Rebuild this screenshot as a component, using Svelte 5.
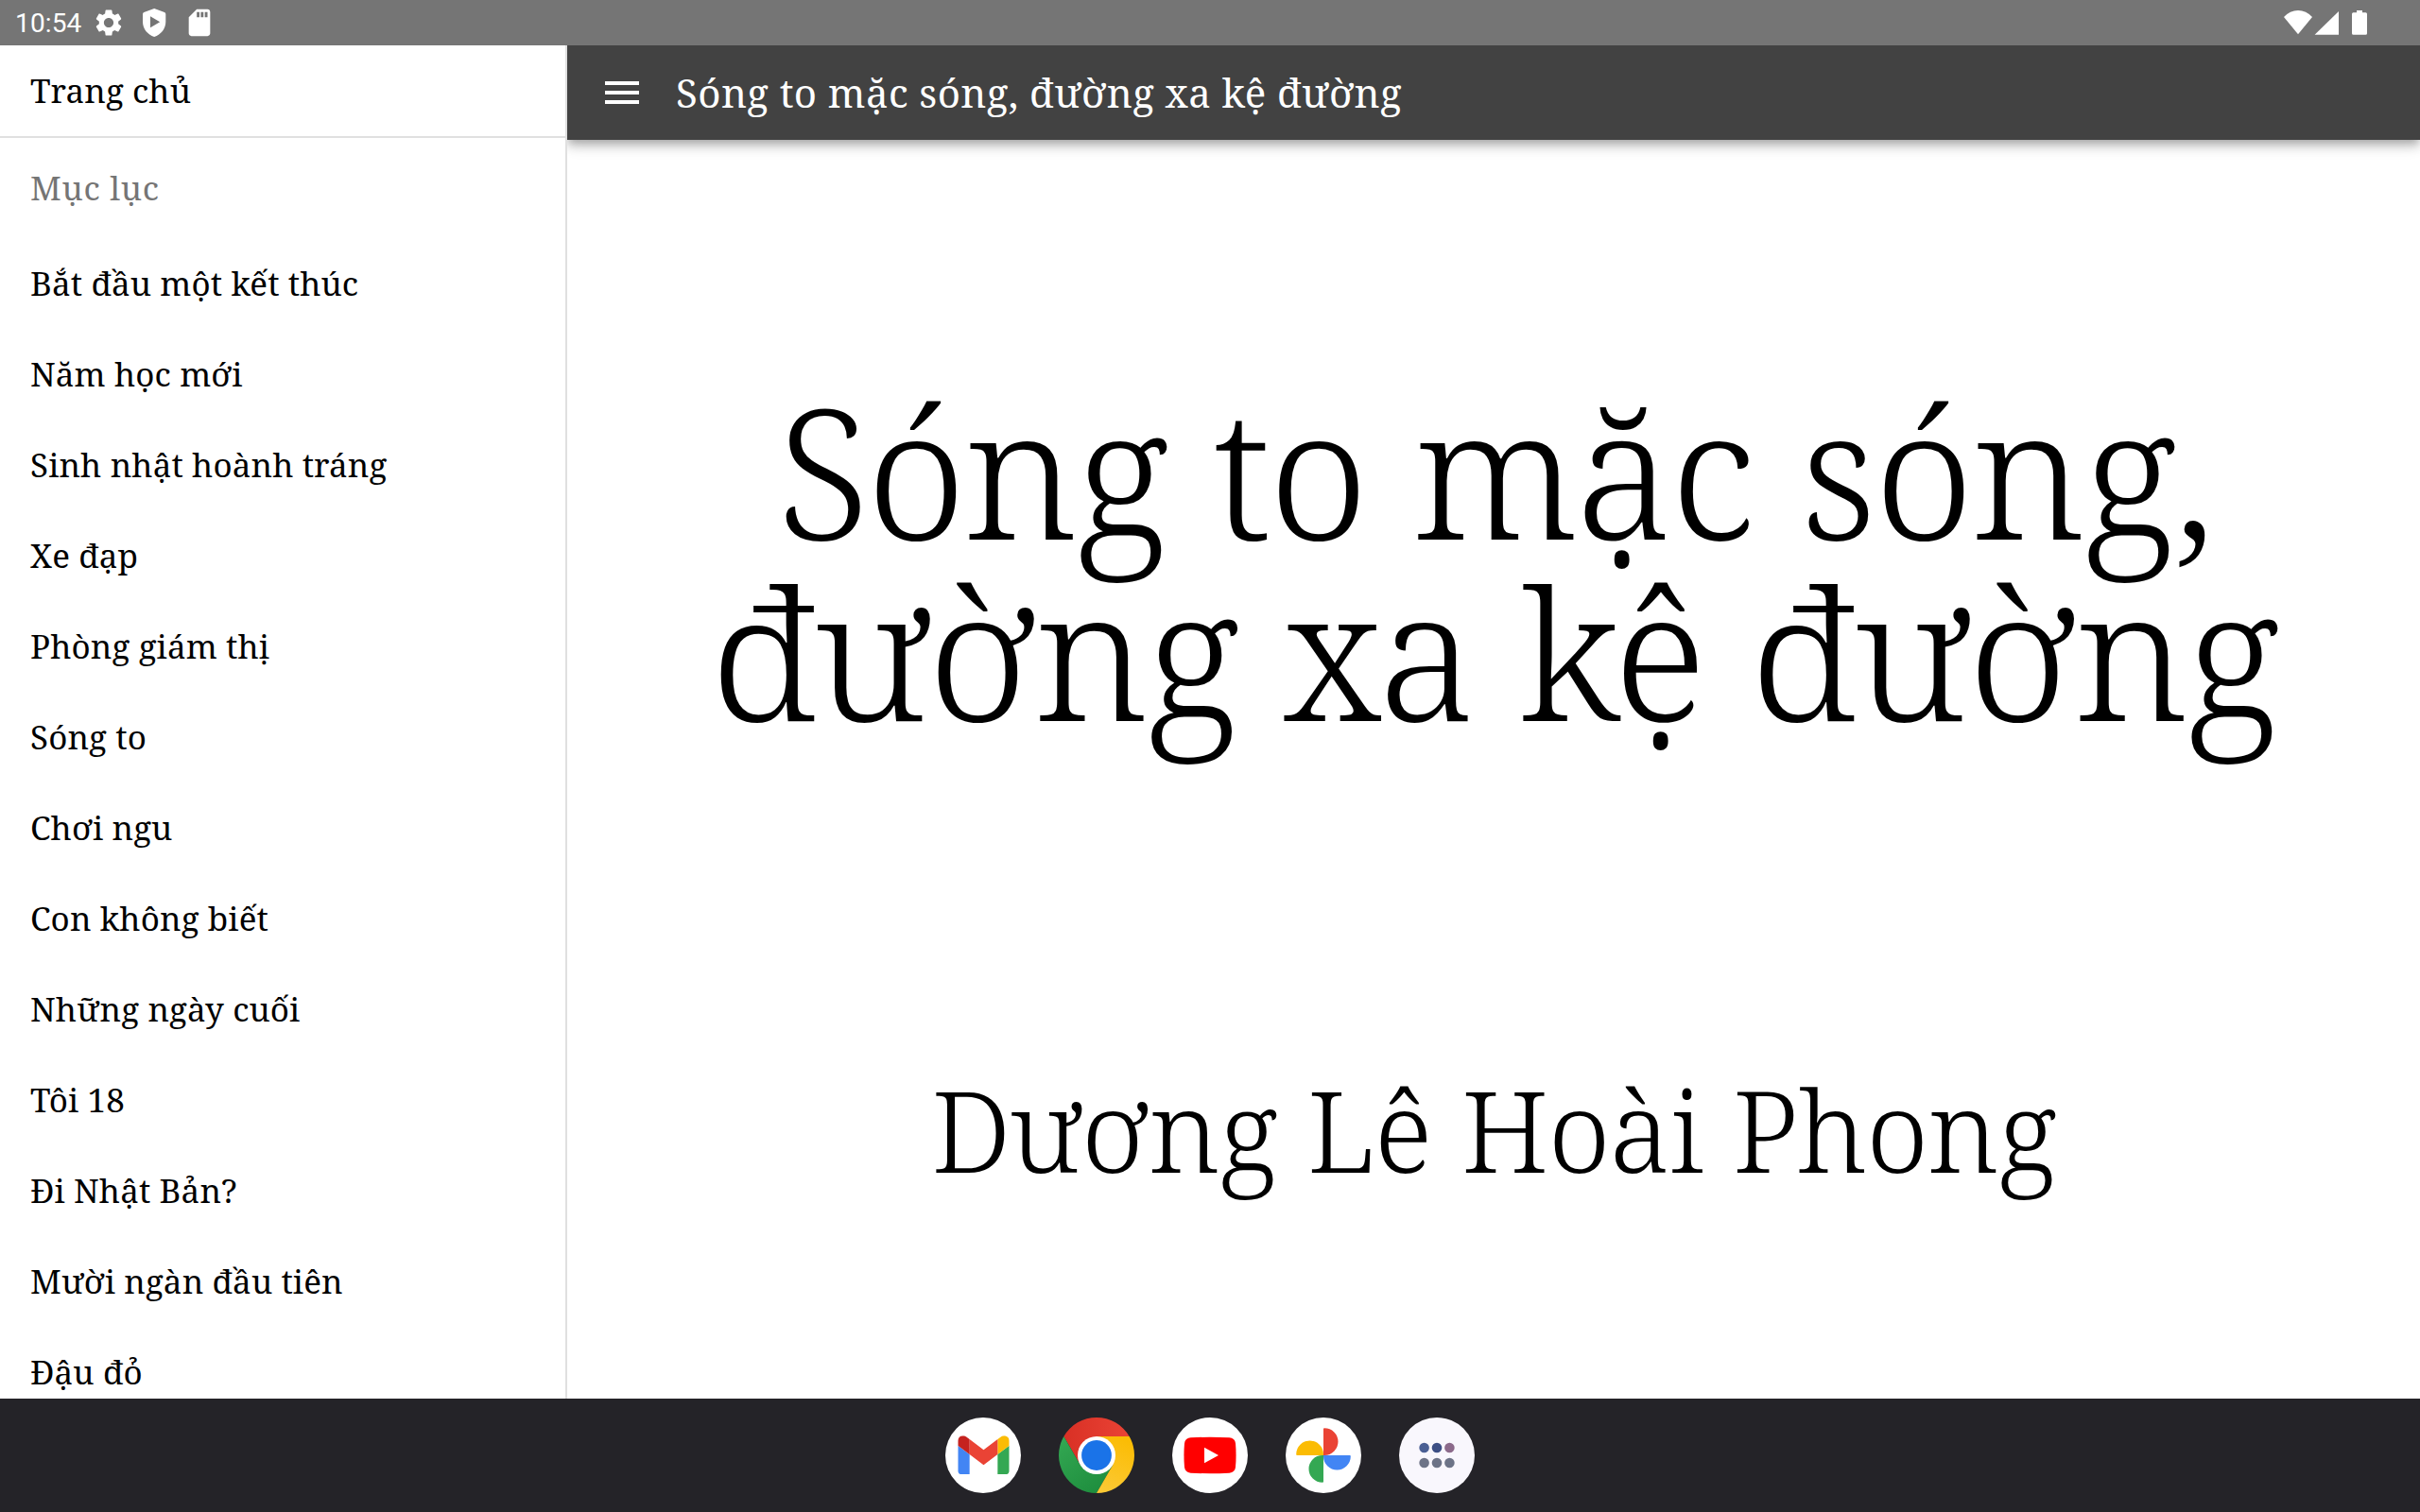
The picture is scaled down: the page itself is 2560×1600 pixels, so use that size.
<script>
  const title = 'Sóng to mặc sóng, đường xa kệ đường';
  const titleLines = ['Sóng to mặc sóng,', 'đường xa kệ đường'];
  const chapters = [
    'Bắt đầu một kết thúc',
    'Năm học mới',
    'Sinh nhật hoành tráng',
    'Xe đạp',
    'Phòng giám thị',
    'Sóng to',
    'Chơi ngu',
    'Con không biết',
    'Những ngày cuối',
    'Tôi 18',
    'Đi Nhật Bản?',
    'Mười ngàn đầu tiên',
    'Đậu đỏ'
  ];
</script>

<div class="screen">
  <div class="status">
    <span class="clock">10:54</span>
    <svg class="notices" width="132" height="48" viewBox="0 0 132 48" fill="#fff">
      <!-- settings -->
      <path transform="translate(8 7) scale(1.4167)" d="M19.14 12.94c.04-.3.06-.61.06-.94 0-.32-.02-.64-.07-.94l2.03-1.58c.18-.14.23-.41.12-.61l-1.92-3.32c-.12-.22-.37-.29-.59-.22l-2.39.96c-.5-.38-1.03-.7-1.62-.94l-.36-2.54c-.04-.24-.24-.41-.48-.41h-3.84c-.24 0-.43.17-.47.41l-.36 2.54c-.59.24-1.13.57-1.62.94l-2.39-.96c-.22-.08-.47 0-.59.22L2.74 8.87c-.12.21-.08.47.12.61l2.03 1.58c-.05.3-.09.63-.09.94s.02.64.07.94l-2.03 1.58c-.18.14-.23.41-.12.61l1.92 3.32c.12.22.37.29.59.22l2.39-.96c.5.38 1.03.7 1.62.94l.36 2.54c.05.24.24.41.48.41h3.84c.24 0 .44-.17.47-.41l.36-2.54c.59-.24 1.13-.56 1.62-.94l2.39.96c.22.08.47 0 .59-.22l1.92-3.32c.12-.22.07-.47-.12-.61l-2.01-1.58zM12 15.6c-1.98 0-3.6-1.62-3.6-3.6s1.62-3.6 3.6-3.6 3.6 1.62 3.6 3.6-1.62 3.6-3.6 3.6z" />
      <!-- play protect shield -->
      <path fill-rule="evenodd" d="M73.2 9 84 13q1.300.5 1.300 2V23c0 7.500-5 13.500-12.100 16C66 36.500 61 30.500 61 23V15q0-1.500 1.300-2zM69 17.200V29.200L79.200 23.200z" />
      <!-- sd card -->
      <path transform="translate(104 7) scale(1.4167)" d="M18 2h-8L4.020 8 4 20c0 1.100.9 2 2 2h12c1.100 0 2-.9 2-2V4c0-1.100-.9-2-2-2zm-6 6h-2V4h2v4zm3 0h-2V4h2v4zm3 0h-2V4h2v4z" />
    </svg>
    <svg class="signals" width="90" height="48" viewBox="0 0 90 48" fill="#fff">
      <path d="M15 36.300 0 18Q6.500 11 15 11T30 18z" />
      <path d="M58 12V36.700H32.600z" />
      <path d="M77 11h6v2.300h3.500a1.500 1.500 0 0 1 1.500 1.500V35.300a1.500 1.500 0 0 1-1.500 1.500h-13a1.500 1.500 0 0 1-1.500-1.500V14.800a1.500 1.500 0 0 1 1.500-1.500H77z" />
    </svg>
  </div>

  <div class="body">
    <nav class="drawer">
      <div class="item home">Trang chủ</div>
      <div class="heading">Mục lục</div>
      {#each chapters as chapter}
        <div class="item">{chapter}</div>
      {/each}
    </nav>

    <div class="page">
      <header class="appbar">
        <svg width="36" height="24" viewBox="0 0 36 24" fill="#fff">
          <path d="M0 0h36v4H0zM0 10h36v4H0zM0 20h36v4H0z" />
        </svg>
        <span>{title}</span>
      </header>
      <main class="cover">
        <h1>
          {#each titleLines as line}<div>{line}</div>{/each}
        </h1>
        <p>Dương Lê Hoài Phong</p>
      </main>
    </div>
  </div>

  <div class="dock">
    <!-- Gmail -->
    <svg viewBox="0 0 80 80">
      <circle cx="40" cy="40" r="40" fill="#fff" />
      <svg x="13.300" y="19.300" width="54.400" height="40.800" viewBox="52 42 88 66">
        <path fill="#4285f4" d="M58 108h14V74L52 59v43c0 3.320 2.690 6 6 6" />
        <path fill="#34a853" d="M120 108h14c3.320 0 6-2.690 6-6V59l-20 15" />
        <path fill="#fbbc04" d="M120 48v26l20-15v-8c0-7.420-8.470-11.650-14.400-7.200" />
        <path fill="#ea4335" d="M72 74V48l24 18 24-18v26L96 92" />
        <path fill="#c5221f" d="M52 51v8l20 15V48l-5.600-4.200c-5.940-4.450-14.400-.22-14.400 7.200" />
      </svg>
    </svg>
    <!-- Chrome -->
    <svg viewBox="0 0 80 80">
      <defs>
        <linearGradient id="cr" x1="0" y1="0" x2="1" y2="0"><stop offset="0" stop-color="#d93025" /><stop offset="1" stop-color="#ea4335" /></linearGradient>
        <linearGradient id="cg" x1="0" y1="0" x2=".7" y2="1"><stop offset="0" stop-color="#34a853" /><stop offset="1" stop-color="#1e8e3e" /></linearGradient>
        <linearGradient id="cy" x1=".3" y1="1" x2=".6" y2="0"><stop offset="0" stop-color="#fcc934" /><stop offset="1" stop-color="#fbbc04" /></linearGradient>
      </defs>
      <path fill="url(#cr)" d="M5.360 20A40 40 0 0 1 74.640 20H40L40 40 22.680 50z" />
      <path fill="url(#cg)" d="M5.360 20 22.680 50 40 40 57.320 50 40 80A40 40 0 0 1 5.360 20z" />
      <path fill="url(#cy)" d="M74.640 20A40 40 0 0 1 40 80L57.320 50 40 40V20z" />
      <circle cx="40" cy="40" r="20" fill="#fff" />
      <circle cx="40" cy="40" r="15.900" fill="#1a73e8" />
    </svg>
    <!-- YouTube -->
    <svg viewBox="0 0 80 80">
      <circle cx="40" cy="40" r="40" fill="#fff" />
      <path fill="#f00" d="M19.500 21.300Q40 20.200 60.500 21.300 66.400 21.900 67 27.500 68.100 40 67 52.500 66.400 58.100 60.500 58.700 40 59.800 19.500 58.700 13.600 58.100 13 52.500 11.900 40 13 27.500 13.600 21.900 19.500 21.300z" />
      <path fill="#fff" d="M34 31.700V48.300L49 40z" />
    </svg>
    <!-- Photos -->
    <svg viewBox="0 0 80 80">
      <circle cx="40" cy="40" r="40" fill="#fff" />
      <path fill="#ea4335" d="M41.100 11.200A14.400 14.400 0 0 1 41.100 40H40V12.200a1 1 0 0 1 1.100-1z" />
      <path fill="#4285f4" transform="rotate(90 40 40)" d="M41.100 11.200A14.400 14.400 0 0 1 41.100 40H40V12.200a1 1 0 0 1 1.100-1z" />
      <path fill="#34a853" transform="rotate(180 40 40)" d="M41.100 11.200A14.400 14.400 0 0 1 41.100 40H40V12.200a1 1 0 0 1 1.100-1z" />
      <path fill="#fbbc04" transform="rotate(270 40 40)" d="M41.100 11.200A14.400 14.400 0 0 1 41.100 40H40V12.200a1 1 0 0 1 1.100-1z" />
    </svg>
    <!-- All apps -->
    <svg viewBox="0 0 80 80">
      <circle cx="40" cy="40" r="40" fill="#f9f7fd" />
      <circle cx="26.600" cy="32" r="5.300" fill="#4a5f94" />
      <circle cx="40" cy="32" r="5.300" fill="#3d4f85" />
      <circle cx="53.400" cy="32" r="5.300" fill="#8c6a8b" />
      <circle cx="26.600" cy="48" r="5.300" fill="#6d7387" />
      <circle cx="40" cy="48" r="5.300" fill="#6d7387" />
      <circle cx="53.400" cy="48" r="5.300" fill="#6d7387" />
    </svg>
  </div>
</div>

<style>
  :global(body) {
    margin: 0;
    background: #fff;
  }
  .screen {
    width: 2560px;
    height: 1600px;
    display: flex;
    flex-direction: column;
    overflow: hidden;
    background: #fff;
    color: #000;
    font-family: "Noto Serif", "DejaVu Serif Condensed", serif;
  }
  /* stacked above the body so the app bar's shadow falls only downwards */
  .status {
    position: relative;
    z-index: 1;
    flex: none;
    height: 48px;
    display: flex;
    box-sizing: border-box;
    padding: 0 54px 0 16px;
    background: #757575;
    color: #fff;
  }
  .clock {
    width: 74px;
    font: 28px/50px Roboto, sans-serif;
    letter-spacing: 0.15px;
  }
  .signals {
    margin-left: auto;
  }
  .status svg {
    display: block;
    overflow: visible;
  }
  .body {
    flex: none;
    height: 1432px;
    display: flex;
  }
  .drawer {
    position: relative;
    z-index: 1;
    flex: none;
    box-sizing: border-box;
    width: 600px;
    height: 1432px;
    overflow: hidden;
    border-right: 2px solid #e0e0e0;
    background: #fff;
    font-size: 35px;
    letter-spacing: 0.1px;
    white-space: nowrap;
  }
  .item {
    height: 96px;
    padding-left: 32px;
    line-height: 95px;
  }
  .home {
    border-bottom: 2px solid #e0e0e0;
  }
  .heading {
    height: 106px;
    padding-left: 32px;
    line-height: 105px;
    letter-spacing: 0.7px;
    color: #757575;
  }
  .page {
    flex: 1;
    display: flex;
    flex-direction: column;
  }
  .appbar {
    flex: none;
    height: 100px;
    display: flex;
    align-items: center;
    gap: 39px;
    box-sizing: border-box;
    padding-left: 40px;
    background: #424242;
    color: #fff;
    font-size: 42px;
    letter-spacing: 0.4px;
    line-height: 99px;
    box-shadow:
      0 4px 8px -2px rgba(0, 0, 0, 0.2),
      0 8px 10px rgba(0, 0, 0, 0.14),
      0 2px 20px rgba(0, 0, 0, 0.12);
  }
  .appbar span {
    height: 100px;
  }
  .cover {
    flex: 1;
    padding-top: 253px;
    text-align: center;
    font-weight: 300;
    white-space: nowrap;
  }
  h1 {
    margin: 0;
    font-size: 191px;
    font-weight: 300;
    line-height: 192px;
    letter-spacing: -3.2px;
    word-spacing: 3px;
  }
  p {
    margin: 350px 0 0;
    font-size: 119.4px;
    line-height: 120px;
    letter-spacing: -1.2px;
    word-spacing: 2px;
  }
  .dock {
    flex: none;
    height: 120px;
    display: flex;
    align-items: center;
    justify-content: center;
    gap: 40px;
    background: #242328;
  }
  .dock > svg {
    width: 80px;
    height: 80px;
  }
</style>
